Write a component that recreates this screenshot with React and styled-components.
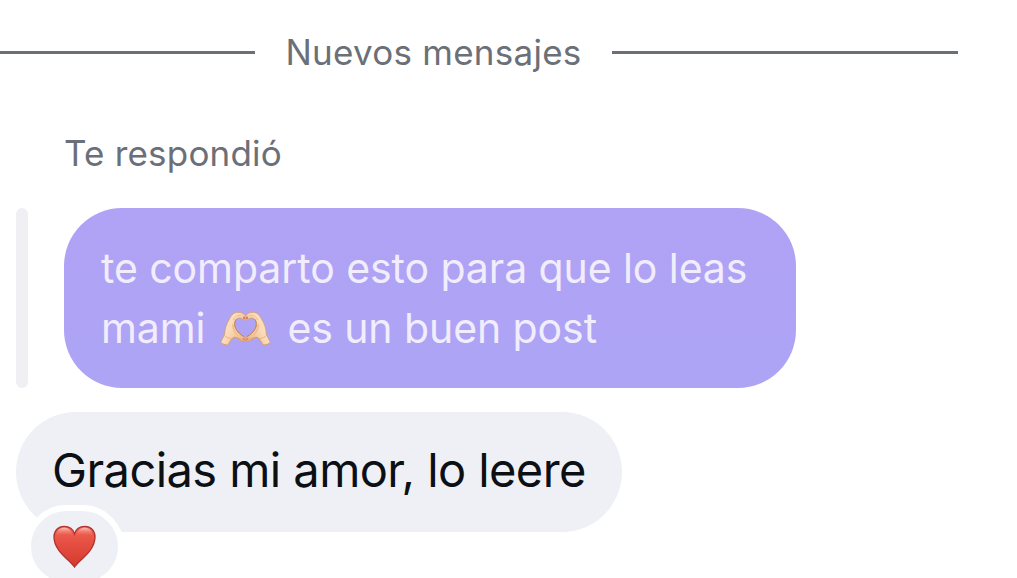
import styled, { createGlobalStyle } from 'styled-components';

const App = () => {
  return (
    <Chat>
      <GlobalStyle />
      <Divider>
        <Line />
        <DividerLabel>Nuevos mensajes</DividerLabel>
        <Line />
      </Divider>
      <ReplyLabel>Te respondió</ReplyLabel>
      <Quote>
        <QuoteBar />
        <QuoteBubble>
          <p>te comparto esto para que lo leas</p>
          <p>
            mami <HeartHands /> <Tail>es un buen post</Tail>
          </p>
        </QuoteBubble>
      </Quote>
      <Bubble>
        <p>Gracias mi amor, lo leere</p>
        <Reaction>
          <Heart />
        </Reaction>
      </Bubble>
    </Chat>
  );
};

const Hand = () => (
  <>
    <path
      d="M47 141 L59 117 C59 101 65 84 73 72 C80 57 88 51 99 51 C110 50 118 55 123 64 C125 71 121 75 115 73 C108 67 101 66 95 71 C87 78 88 90 92 99 C97 110 107 118 116 123 C123 127 125 133 121 137 C116 140 108 136 102 132 C95 128 88 125 83 128 C77 133 73 141 69 149 C61 149 53 147 47 141 Z"
      fill="url(#skin)"
      stroke="#d59a66"
      strokeWidth="2.4"
      strokeLinejoin="round"
    />
    <path
      d="M95 71 C87 78 88 90 92 99 C97 110 107 118 116 123"
      fill="none"
      stroke="#c98250"
      strokeWidth="3"
      strokeLinecap="round"
    />
    <path d="M85 74 C91 61 98 60 106 60" fill="none" stroke="#e6b283" strokeWidth="2.4" strokeLinecap="round" />
    <path d="M83 88 C84 100 88 110 97 119" fill="none" stroke="#efc08f" strokeWidth="5" strokeLinecap="round" />
    <path d="M84 127 C91 123 99 128 107 132" fill="none" stroke="#dba06d" strokeWidth="3" strokeLinecap="round" />
    <path d="M58 120 C64 126 71 129 80 130" fill="none" stroke="#e5ac7b" strokeWidth="2.6" />
    <path d="M114 64 C119 62 123 66 121 71 L114 71 Z" fill="#d97f6c" />
    <path d="M113 127 C119 127 122 132 120 135 L113 135 Z" fill="#dc8c6f" />
  </>
);

const HeartHands = () => (
  <HandsIcon viewBox="45 48 153 103" role="img" aria-label="manos en forma de corazón">
    <defs>
      <linearGradient id="skin" x1="0" y1="0" x2="1" y2="0.6">
        <stop offset="0" stopColor="#fce6c8" />
        <stop offset="0.5" stopColor="#fadbb8" />
        <stop offset="1" stopColor="#edb78c" />
      </linearGradient>
    </defs>
    <Hand />
    <g transform="translate(243 0) scale(-1 1)">
      <Hand />
    </g>
  </HandsIcon>
);

const Heart = () => (
  <HeartIcon viewBox="0 0 128 128" role="img" aria-label="corazón">
    <defs>
      <linearGradient id="heart" x1="0" y1="0" x2="0" y2="1">
        <stop offset="0" stopColor="#ee6556" />
        <stop offset="0.4" stopColor="#e65042" />
        <stop offset="1" stopColor="#d33a2c" />
      </linearGradient>
      <linearGradient id="shine" x1="0" y1="0" x2="0" y2="1">
        <stop offset="0" stopColor="#fbc0b4" />
        <stop offset="1" stopColor="#ee6555" stopOpacity="0" />
      </linearGradient>
    </defs>
    <path
      d="M64 125 C52 105 3 79 3 36 C3 17 16 4 33 4 C48 4 60 13 64 26 C68 13 80 4 95 4 C112 4 125 17 125 36 C125 79 76 105 64 125 Z"
      fill="url(#heart)"
      stroke="#b23430"
      strokeWidth="4"
    />
    <path d="M9 34 C11 14 22 8 33 8 C46 8 55 15 59 32 C49 26 20 25 9 34 Z" fill="url(#shine)" />
    <path d="M119 34 C117 14 106 8 95 8 C82 8 73 15 69 32 C79 26 108 25 119 34 Z" fill="url(#shine)" />
  </HeartIcon>
);

const GlobalStyle = createGlobalStyle`
  * {
    box-sizing: border-box;
  }
  body {
    margin: 0;
    background-color: #fff;
    font-family: Inter, "Liberation Sans", sans-serif;
    overflow: hidden;
  }
  p {
    margin: 0;
    white-space: nowrap;
  }
`;

const Chat = styled.main`
  width: 1017px;
  height: 578px;
  padding-top: 30px;
  overflow: hidden;
`;

const Divider = styled.div`
  display: flex;
  align-items: center;
  width: 958px;
  height: 45px;
`;

const Line = styled.div`
  flex: 1;
  height: 3px;
  background-color: #6b6f78;
  &:first-child {
    flex: 0 0 255px;
  }
`;

const DividerLabel = styled.span`
  width: 357px;
  text-align: center;
  color: #6b7078;
  font-size: 35px;
  line-height: 45px;
  letter-spacing: 0.25px;
  white-space: nowrap;
`;

const ReplyLabel = styled.p`
  height: 45px;
  margin: 56px 0 32px 64px;
  color: #6b7078;
  font-size: 35px;
  line-height: 45px;
  letter-spacing: 0.2px;
`;

const Quote = styled.div`
  display: flex;
  gap: 36px;
  height: 180px;
  margin-left: 16px;
`;

const QuoteBar = styled.div`
  width: 12px;
  border-radius: 6px;
  background-color: #f0f0f4;
`;

const QuoteBubble = styled.div`
  width: 732px;
  padding: 30px 37px;
  border-radius: 58px;
  background: linear-gradient(#b0a2f5, #ada4f4);
  color: #f1edfd;
  font-size: 41px;
  line-height: 60px;
  letter-spacing: -0.08px;
`;

const Tail = styled.span`
  margin-left: 5px;
`;

const HandsIcon = styled.svg`
  width: 51px;
  height: 35px;
  margin-left: 3px;
  vertical-align: -3px;
`;

const Bubble = styled.div`
  position: relative;
  width: 606px;
  height: 120px;
  margin: 24px 0 0 16px;
  padding: 28px 36px;
  border-radius: 60px;
  background-color: #eff0f5;
  color: #0c1014;
  font-size: 47px;
  line-height: 60px;
  letter-spacing: -0.57px;
`;

const Reaction = styled.div`
  position: absolute;
  top: 93px;
  left: 9px;
  display: flex;
  align-items: center;
  justify-content: center;
  width: 99px;
  height: 83px;
  border: 6px solid #fff;
  border-radius: 42px;
  background-color: #eff0f5;
`;

const HeartIcon = styled.svg`
  width: 43px;
  height: 43px;
`;

export default App;
